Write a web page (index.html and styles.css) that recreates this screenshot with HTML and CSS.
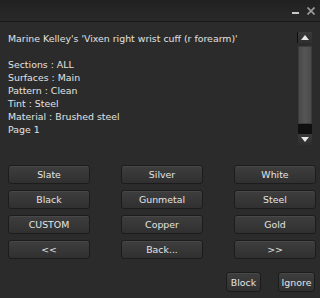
FILE: index.html
```html
<!DOCTYPE html>
<html>
<head>
<meta charset="utf-8">
<link rel="stylesheet" href="styles.css">
</head>
<body>
<div class="floater">
  <div class="titlebar">
    <span class="minimize"></span>
    <svg class="close" width="8" height="8" viewBox="0 0 8 8"><path d="M0.5 0.5 L7.5 7.5 M7.5 0.5 L0.5 7.5" stroke="#9a9a9a" stroke-width="1.7"/></svg>
  </div>
  <div class="body">
    <div class="textbox">
      <div class="text">
        <div>Marine Kelley's 'Vixen right wrist cuff (r forearm)'</div>
        <div>&nbsp;</div>
        <div>Sections : ALL</div>
        <div>Surfaces : Main</div>
        <div>Pattern : Clean</div>
        <div>Tint : Steel</div>
        <div>Material : Brushed steel</div>
        <div>Page 1</div>
      </div>
      <div class="scrollbar">
        <div class="sb-btn sb-up"><svg width="8" height="5" viewBox="0 0 8 5"><path d="M0 5 L4 0 L8 5 Z" fill="#e8e8e8"/></svg></div>
        <div class="sb-thumb"></div>
        <div class="sb-track"></div>
        <div class="sb-btn sb-down"><svg width="8" height="5" viewBox="0 0 8 5"><path d="M0 0 L4 5 L8 0 Z" fill="#e8e8e8"/></svg></div>
      </div>
    </div>
    <div class="grid">
      <div class="btn">Slate</div>
      <div class="btn">Silver</div>
      <div class="btn">White</div>
      <div class="btn">Black</div>
      <div class="btn">Gunmetal</div>
      <div class="btn">Steel</div>
      <div class="btn">CUSTOM</div>
      <div class="btn">Copper</div>
      <div class="btn">Gold</div>
      <div class="btn">&lt;&lt;</div>
      <div class="btn">Back...</div>
      <div class="btn">&gt;&gt;</div>
    </div>
    <div class="footer">
      <div class="btn small block">Block</div>
      <div class="btn small ignore">Ignore</div>
    </div>
  </div>
</div>
</body>
</html>
```

FILE: styles.css
```css
html, body {
  margin: 0;
  padding: 0;
  background: #2b2b2b;
}
.floater {
  width: 320px;
  height: 298px;
  font-family: "DejaVu Sans", sans-serif;
  font-size: 9.4px;
  color: #e2e2e2;
  overflow: hidden;
}
.titlebar {
  height: 21px;
  border-bottom: 1px solid #171717;
  background: linear-gradient(#202020, #2a2a2a);
  display: flex;
  justify-content: flex-end;
  align-items: flex-start;
}
.minimize {
  width: 7px;
  height: 2px;
  background: #c8c8c8;
  margin-top: 12px;
  margin-right: 8px;
}
.close {
  margin-top: 7px;
  margin-right: 5px;
}
.body {
  padding: 10px 0 0 0;
}
.textbox {
  display: flex;
  height: 115px;
  padding-left: 8px;
}
.text {
  flex: 1;
  line-height: 13px;
}
.scrollbar {
  width: 14px;
  margin-right: 8px;
  display: flex;
  flex-direction: column;
}
.sb-btn {
  height: 11px;
  background: linear-gradient(#3a3a3a, #2e2e2e);
  display: flex;
  align-items: center;
  justify-content: center;
}
.sb-up {
  border-left: 1px solid #0e0e0e;
  margin-left: -1px;
}
.sb-thumb {
  height: 78px;
  margin-top: 3px;
  background: linear-gradient(90deg, #4a4a4a, #555 50%, #4a4a4a);
  border: 1px solid #3c3c3c;
  box-sizing: border-box;
}
.sb-track {
  height: 10px;
  background: #101010;
}
.grid {
  margin-top: 18px;
  padding: 0 5px 0 8px;
  display: grid;
  grid-template-columns: 82px 82px 82px;
  column-gap: 31px;
  row-gap: 6px;
}
.btn {
  height: 19px;
  box-sizing: border-box;
  border: 1px solid #1c1c1c;
  border-radius: 3px;
  background: linear-gradient(#3e3e3e, #303030);
  box-shadow: inset 0 1px 0 #484848;
  display: flex;
  align-items: center;
  justify-content: center;
  color: #e4e4e4;
}
.footer {
  margin-top: 13px;
  display: flex;
  justify-content: flex-end;
  padding-right: 5px;
  gap: 17px;
}
.small {
  height: 20px;
}
.block { width: 35px; }
.ignore { width: 37px; }
```
